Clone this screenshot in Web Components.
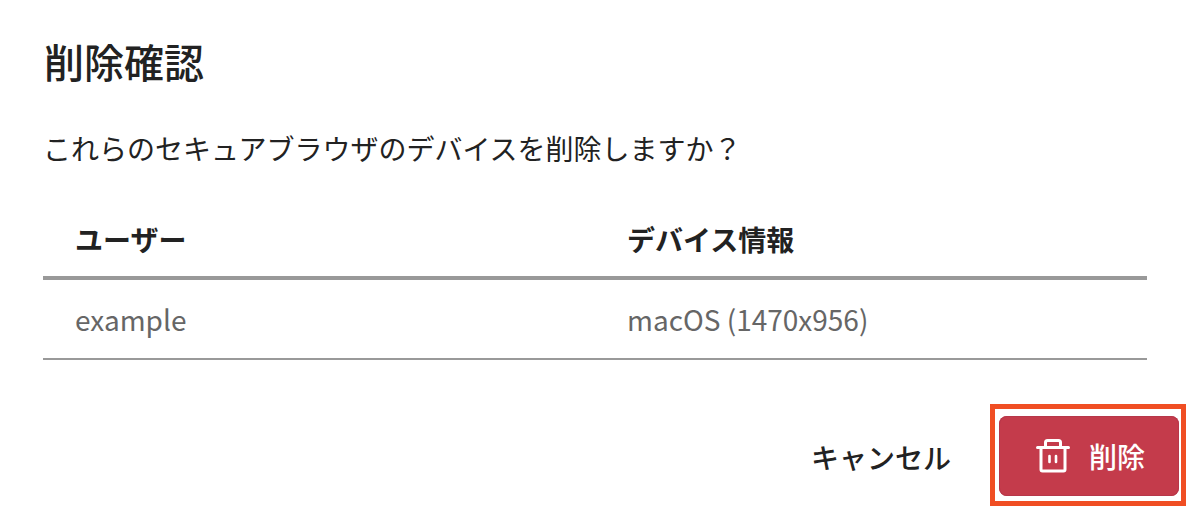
<!DOCTYPE html>
<html lang="ja">
<head>
<meta charset="utf-8">
<title>削除確認</title>
<style>
  html, body { margin: 0; background: #fff; }
  body { font-family: "Noto Sans CJK JP", "Noto Sans", sans-serif; color: #222; }
</style>
</head>
<body>
<confirm-dialog>
  <span slot="title">削除確認</span>
  <span slot="message">これらのセキュアブラウザのデバイスを削除しますか？</span>
  <device-table slot="content" user="example" device="macOS (1470x956)"></device-table>
  <text-button slot="actions">キャンセル</text-button>
  <danger-button slot="actions">削除</danger-button>
</confirm-dialog>
<script>
class ConfirmDialog extends HTMLElement {
  constructor() {
    super();
    this.attachShadow({ mode: 'open' });
    this.shadowRoot.innerHTML = `
      <style>
        :host { display: block; box-sizing: border-box; width: 1190px; height: 512px; padding: 33px 43px 0 43px; overflow: hidden; }
        h2 { margin: 0 0 0 1px; font-size: 40px; line-height: 56px; font-weight: 500; color: #222; }
        p { margin: 37px 0 0; font-size: 28px; line-height: 44px; color: #222; }
        .content { margin-top: 34px; }
        .actions { display: flex; justify-content: flex-end; align-items: center; gap: 39px; margin-top: 44px; margin-right: -39px; }
      </style>
      <h2><slot name="title"></slot></h2>
      <p><slot name="message"></slot></p>
      <div class="content"><slot name="content"></slot></div>
      <div class="actions"><slot name="actions"></slot></div>
    `;
  }
}

class DeviceTable extends HTMLElement {
  constructor() {
    super();
    this.attachShadow({ mode: 'open' });
    this.shadowRoot.innerHTML = `
      <style>
        :host { display: block; font-size: 28px; }
        .row { display: grid; grid-template-columns: 552px 1fr; padding-left: 32px; box-sizing: border-box; align-items: center; }
        .head { height: 76px; padding-bottom: 3px; font-weight: 700; color: #222; border-bottom: 4px solid #999; }
        .body { height: 80px; color: #666; border-bottom: 2px solid #999; }
      </style>
      <div class="row head"><span>ユーザー</span><span>デバイス情報</span></div>
      <div class="row body"><span class="user"></span><span class="device"></span></div>
    `;
    this.shadowRoot.querySelector('.user').textContent = this.getAttribute('user');
    this.shadowRoot.querySelector('.device').textContent = this.getAttribute('device');
  }
}

class TextButton extends HTMLElement {
  constructor() {
    super();
    this.attachShadow({ mode: 'open' });
    this.shadowRoot.innerHTML = `
      <style>
        :host { display: block; margin-top: 4px; font-size: 28px; font-weight: 500; line-height: 40px; color: #222; }
      </style>
      <slot></slot>
    `;
  }
}

class DangerButton extends HTMLElement {
  constructor() {
    super();
    this.attachShadow({ mode: 'open' });
    this.shadowRoot.innerHTML = `
      <style>
        :host { display: block; box-sizing: border-box; width: 196px; height: 102px; padding: 7px 2px 5px 4px; border: 5px solid #f04e23; }
        .btn { box-sizing: border-box; height: 100%; display: flex; align-items: center; justify-content: center; gap: 19px; padding: 0 0 0 3px;
          background: #c43b4b; border-radius: 8px; box-shadow: inset 0 0 0 1px #b7374a;
          color: #fff; font-size: 28px; font-weight: 500; }
        svg { width: 34px; height: 34px; display: block; }
      </style>
      <div class="btn">
        <svg viewBox="0 0 34 34" fill="none" stroke="#fff" stroke-width="3" stroke-linecap="round" stroke-linejoin="round">
          <path d="M1.5 8.5h31"/>
          <path d="M5 8.5v22a1.5 1.5 0 0 0 1.5 1.5h21a1.5 1.5 0 0 0 1.5-1.5v-22"/>
          <path d="M9.5 8V3.5a2 2 0 0 1 2-2h11a2 2 0 0 1 2 2V8"/>
          <path d="M13.5 17v6M20 17v6" stroke-width="2.6"/>
        </svg>
        <span><slot></slot></span>
      </div>
    `;
  }
}

customElements.define('confirm-dialog', ConfirmDialog);
customElements.define('device-table', DeviceTable);
customElements.define('text-button', TextButton);
customElements.define('danger-button', DangerButton);
</script>
</body>
</html>
